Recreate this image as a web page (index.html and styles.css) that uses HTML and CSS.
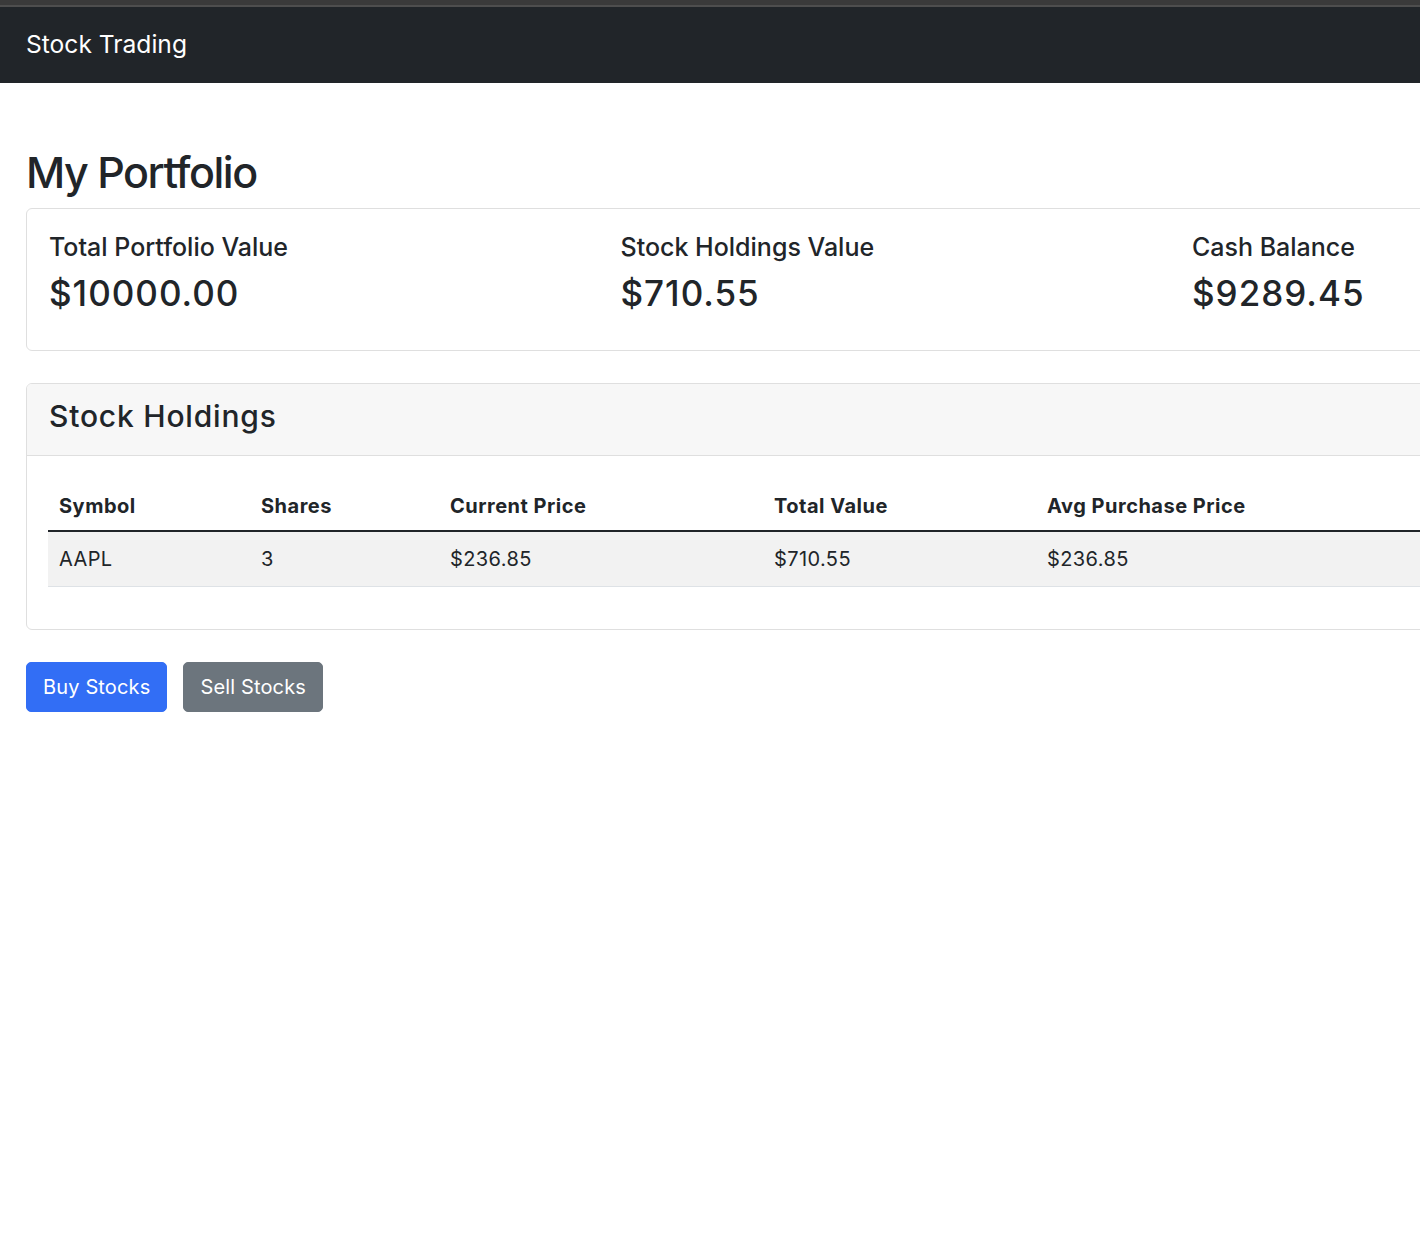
FILE: index.html
```html
<!DOCTYPE html>
<html lang="en">
<head>
<meta charset="utf-8">
<title>Stock Trading</title>
<link rel="stylesheet" href="styles.css">
</head>
<body>
<div class="chrome"></div>
<nav class="navbar">
  <a class="brand" href="#">Stock Trading</a>
</nav>
<main class="container">
  <h1 class="page-title">My Portfolio</h1>

  <section class="card summary">
    <div class="card-body summary-grid">
      <div class="stat">
        <h5 class="stat-label">Total Portfolio Value</h5>
        <h3 class="stat-value">$10000.00</h3>
      </div>
      <div class="stat">
        <h5 class="stat-label">Stock Holdings Value</h5>
        <h3 class="stat-value">$710.55</h3>
      </div>
      <div class="stat">
        <h5 class="stat-label">Cash Balance</h5>
        <h3 class="stat-value">$9289.45</h3>
      </div>
    </div>
  </section>

  <section class="card holdings">
    <div class="card-header">
      <h4 class="card-title">Stock Holdings</h4>
    </div>
    <div class="card-body table-body">
      <table class="table">
        <colgroup>
          <col class="c-symbol">
          <col class="c-shares">
          <col class="c-price">
          <col class="c-total">
          <col class="c-avg">
        </colgroup>
        <thead>
          <tr>
            <th>Symbol</th>
            <th>Shares</th>
            <th>Current Price</th>
            <th>Total Value</th>
            <th>Avg Purchase Price</th>
          </tr>
        </thead>
        <tbody>
          <tr class="striped">
            <td>AAPL</td>
            <td>3</td>
            <td>$236.85</td>
            <td>$710.55</td>
            <td>$236.85</td>
          </tr>
        </tbody>
      </table>
    </div>
  </section>

  <div class="actions">
    <button class="btn btn-primary" type="button">Buy Stocks</button>
    <button class="btn btn-secondary" type="button">Sell Stocks</button>
  </div>
</main>
</body>
</html>
```

FILE: styles.css
```css
html, body {
  margin: 0;
  padding: 0;
  overflow-x: hidden;
}

body {
  font-family: Inter, "Noto Sans", "Liberation Sans", sans-serif;
  color: #212529;
  background: #ffffff;
  font-size: 20px;
  line-height: 1.5;
}

.chrome {
  height: 5px;
  background: #3a3a3a;
  border-bottom: 2px solid #4e4e4e;
}

.navbar {
  height: 76px;
  background: #212529;
  display: flex;
  align-items: center;
  padding-left: 26px;
}

.brand {
  color: #ffffff;
  text-decoration: none;
  font-size: 24.6px;
  line-height: 34px;
  font-weight: 400;
  margin-top: -2px;
}

.container {
  width: 1768px;
  padding: 63px 0 0 26px;
  box-sizing: content-box;
}

.page-title {
  margin: 0 0 9px;
  font-size: 43px;
  line-height: 53px;
  font-weight: 500;
  letter-spacing: -1.5px;
}

.card {
  border: 1px solid #dfdfdf;
  border-radius: 6px;
  background: #ffffff;
  margin-bottom: 32px;
  overflow: hidden;
}

.summary-grid {
  display: grid;
  grid-template-columns: repeat(3, 571.5px);
  padding: 23px 22px 36px;
}

.stat-label {
  margin: 0 0 10px;
  font-size: 25px;
  line-height: 30px;
  font-weight: 500;
}

.stat-value {
  margin: 0;
  font-size: 35px;
  line-height: 42px;
  font-weight: 500;
  letter-spacing: 1px;
}

.card-header {
  background: #f7f7f7;
  border-bottom: 1px solid #dfdfdf;
  padding: 15px 22px 12px;
}

.card-title {
  margin: 0 0 9.6px;
  font-size: 30px;
  line-height: 34.5px;
  font-weight: 500;
  letter-spacing: 0.8px;
}

.table-body {
  padding: 26px 0 23px 21px;
}

.table {
  width: 100%;
  border-collapse: collapse;
  table-layout: fixed;
  margin-bottom: 19px;
}

.c-symbol { width: 202px; }
.c-shares { width: 189px; }
.c-price { width: 324px; }
.c-total { width: 273px; }

.table th {
  text-align: left;
  font-weight: 700;
  padding: 9.6px 11px;
  line-height: 28.8px;
  letter-spacing: 0.5px;
  border-bottom: 2px solid #212529;
}

.table td {
  padding: 12.6px 11px;
  line-height: 28.8px;
  letter-spacing: 0.4px;
  border-bottom: 1px solid #dee2e6;
}

.striped td {
  background: #f2f2f2;
}

.actions {
  display: flex;
  gap: 16px;
}

.btn {
  font-family: inherit;
  font-size: 20px;
  line-height: 28.8px;
  letter-spacing: 0.15px;
  padding: 9.6px 16px;
  border-radius: 5px;
  border: 1px solid transparent;
  color: #ffffff;
  cursor: pointer;
}

.btn-primary {
  background: #326ef5;
  border-color: #326ef5;
}

.btn-secondary {
  background: #6c757d;
  border-color: #6c757d;
}
```
